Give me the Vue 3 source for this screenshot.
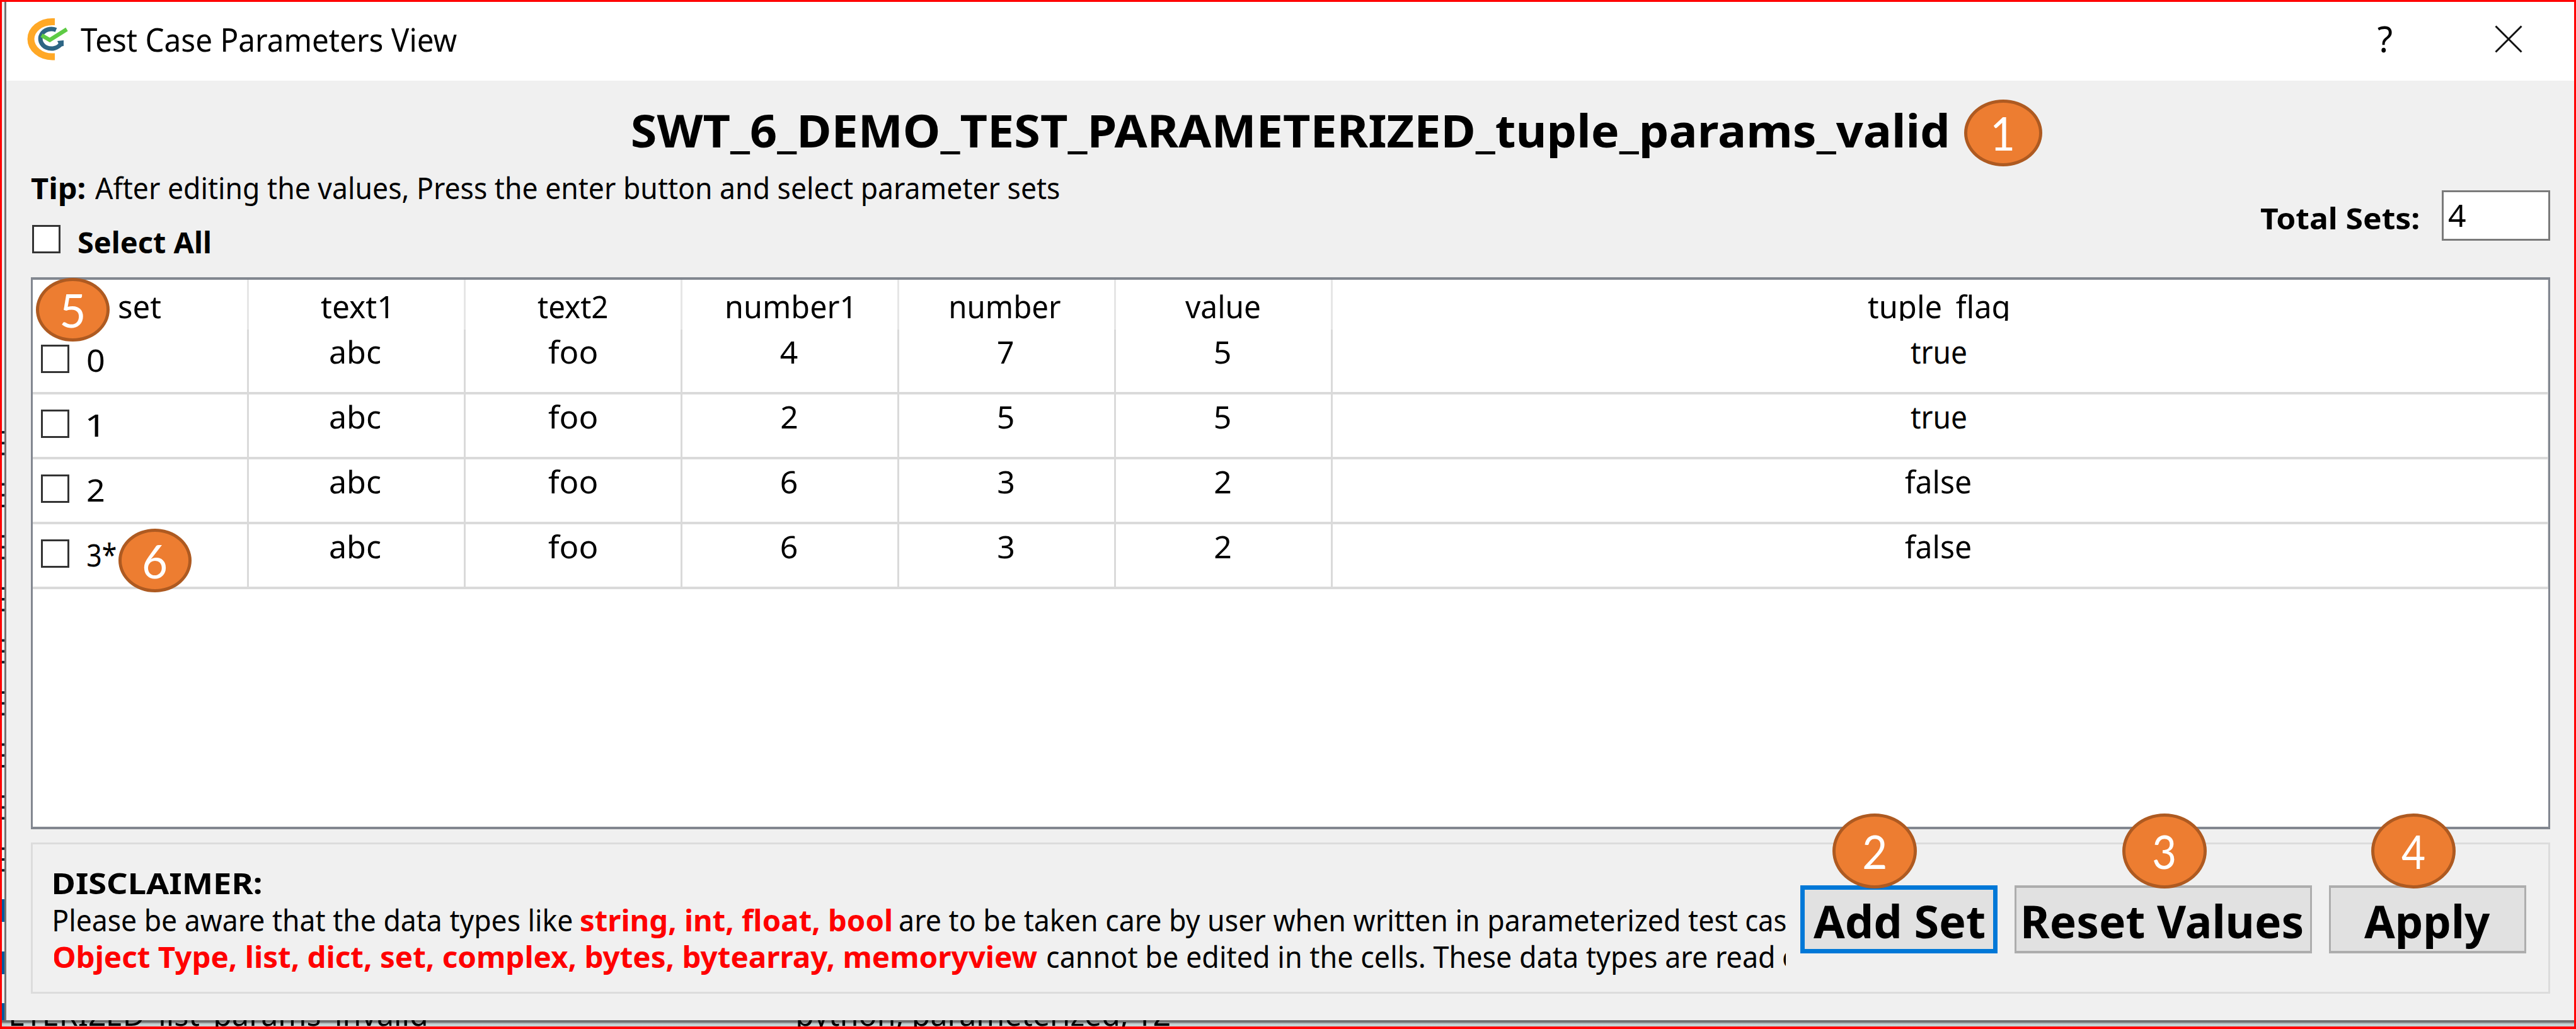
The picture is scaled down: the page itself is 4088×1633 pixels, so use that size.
<script setup>
// Stretches a run of text so that its visible glyphs span exactly the given width.
const pen = document.createElement('canvas').getContext('2d')
const vFit = {
  mounted(el, { value }) {
    const cs = getComputedStyle(el)
    pen.font = `${cs.fontWeight} ${cs.fontSize} ${cs.fontFamily}`
    const m = pen.measureText(el.textContent.trim())
    const scale = value / (m.actualBoundingBoxLeft + m.actualBoundingBoxRight)
    el.style.marginRight = `${value - el.offsetWidth}px`
    el.style.transform = `translateX(${m.actualBoundingBoxLeft * scale}px) scaleX(${scale})`
  },
}

const headers = [
  ['set', 66], ['text1', 107], ['text2', 110], ['number1', 196], ['number', 174], ['value', 118], ['tuple_flag', 223],
]
const widths = { abc: 80, foo: 77, true: 88, false: 104, 2: 24, 3: 24, 4: 27, 5: 23, 6: 25, 7: 24 }
const rows = [
  { id: '0', w: 26, cells: ['abc', 'foo', '4', '7', '5', 'true'] },
  { id: '1', w: 17, cells: ['abc', 'foo', '2', '5', '5', 'true'] },
  { id: '2', w: 25, cells: ['abc', 'foo', '6', '3', '2', 'false'] },
  { id: '3*', w: 45, cells: ['abc', 'foo', '6', '3', '2', 'false'] },
]
const badges = [
  { n: 1, x: 3117, y: 158, w: 124, h: 106, g: 31 },
  { n: 2, x: 2908, y: 1291, w: 134, h: 119, g: 34 },
  { n: 3, x: 3368, y: 1291, w: 134, h: 119, g: 33 },
  { n: 4, x: 3763, y: 1291, w: 134, h: 119, g: 37 },
  { n: 5, x: 57, y: 441, w: 117, h: 101, g: 34 },
  { n: 6, x: 188, y: 839, w: 116, h: 101, g: 36 },
]
const marks = Array.from({ length: 27 }, (_, i) => 681 + Math.floor(i / 3) * 82.6 + (i % 3) * 17.2)
</script>

<template>
  <div class="screen">
    <div class="main">
      <svg class="gutter" width="4" height="1616" viewBox="0 0 4 1616">
        <rect v-for="y in marks" :key="y" x="0" :y="y" width="4" height="4" fill="#14202c" />
        <rect v-for="y in [1424, 1507, 1589]" :key="y" x="0" :y="y" width="4" height="36" fill="#005a9e" />
      </svg>
      <div class="window">
        <header class="titlebar">
          <svg class="logo" width="68" height="72" viewBox="41 26 68 72" fill="none">
            <path d="M87 34.5H83C64 34.5 49 47 49 62S64 90 83 90H87" stroke="#ffa826" stroke-width="11" />
            <path d="M89 47.5A17.5 15.5 0 1 0 97 69" stroke="#2d6584" stroke-width="7" />
            <path d="M91 65L101 64L101 73L95 74Z" fill="#2d6584" />
            <path d="M66 56L79 63.5L106 46.5" stroke="#5ecb45" stroke-width="6.5" />
          </svg>
          <span class="caption"><span v-fit="597" class="fit">Test Case Parameters View</span></span>
          <span class="help"><span v-fit="23" class="fit">?</span></span>
          <svg class="close" width="44" height="44" viewBox="0 0 44 44">
            <path d="M1.5 1.5L42.5 42.5M42.5 1.5L1.5 42.5" stroke="#111" stroke-width="3" />
          </svg>
        </header>
        <main class="body">
          <h1><span v-fit="2086" class="fit">SWT_6_DEMO_TEST_PARAMETERIZED_tuple_params_valid</span></h1>
          <section class="controls">
            <div>
              <div class="tip"><b v-fit="85" class="fit">Tip:</b><span v-fit="1530" class="fit">After editing the values, Press the enter button and select parameter sets</span></div>
              <label class="all"><i class="check"></i><b v-fit="208" class="fit">Select All</b></label>
            </div>
            <div class="total">
              <b v-fit="251" class="fit">Total Sets:</b>
              <div class="field"><span v-fit="27" class="fit">4</span></div>
            </div>
          </section>
          <section class="table">
            <div class="row head">
              <div v-for="h in headers" :key="h[0]" class="cell">
                <div :class="{ clip: h[0] === 'tuple_flag' }"><span v-fit="h[1]" class="fit">{{ h[0] }}</span></div>
              </div>
            </div>
            <div v-for="r in rows" :key="r.id" class="row">
              <div class="cell index"><i class="check"></i><span v-fit="r.w" class="fit">{{ r.id }}</span></div>
              <div v-for="(c, i) in r.cells" :key="i" class="cell"><span v-fit="widths[c]" class="fit">{{ c }}</span></div>
            </div>
          </section>
          <section class="notice">
            <div class="text">
              <div class="line"><b v-fit="328" class="fit">DISCLAIMER:</b></div>
              <div class="line">
                <span v-fit="822" class="fit">Please be aware that the data types like</span>
                <b v-fit="492" class="fit red">string, int, float, bool</b>
                <span v-fit="1329" class="fit">are to be taken care by user when written in parameterized test</span>
                <span v-fit="63" class="fit">cas</span>
              </div>
              <div class="line second">
                <b v-fit="1561" class="fit red">Object Type, list, dict, set, complex, bytes, bytearray, memoryview</b>
                <span v-fit="1152" class="fit">cannot be edited in the cells. These data types are read</span>
                <span v-fit="23" class="fit">o</span>
              </div>
            </div>
            <div class="buttons">
              <button class="focus"><span v-fit="271" class="fit">Add Set</span></button>
              <button class="wide"><span v-fit="442" class="fit">Reset Values</span></button>
              <button><span v-fit="200" class="fit">Apply</span></button>
            </div>
          </section>
        </main>
      </div>
    </div>
    <footer class="behind">
      <span v-fit="659" class="fit">ETERIZED_list_params_invalid</span>
      <span v-fit="590" class="fit tags">python, parameterized, TZ</span>
    </footer>
    <div v-for="b in badges" :key="b.n" class="badge"
      :style="{ left: b.x - 3 + 'px', top: b.y - 3 + 'px', width: b.w + 'px', height: b.h + 'px' }">
      <span v-fit="b.g" class="fit">{{ b.n }}</span>
    </div>
  </div>
</template>

<style>
body { margin: 0; overflow: hidden; }
</style>

<style scoped>
.screen {
  position: relative;
  box-sizing: border-box;
  width: 4088px;
  height: 1633px;
  border: solid #f00;
  border-width: 3px 3px 4px 3px;
  background: #f0f0f0;
  color: #000;
  font-family: "Noto Sans", "Open Sans", sans-serif;
  font-size: 47px;
  overflow: hidden;
}
.fit { display: inline-block; flex: none; white-space: nowrap; transform-origin: 0 50%; }
.main { display: flex; height: 1616px; }
.gutter { flex: none; background: #eef0f0; }
.window { box-sizing: border-box; flex: 1; border-left: 3px solid #747474; background: #f0f0f0; }
.titlebar { display: flex; height: 125px; background: #fff; }
.logo { margin: 23px 0 0 31px; flex: none; }
.caption { margin-left: 19px; font-size: 51px; line-height: 118px; }
.help { margin-left: auto; font-size: 56px; line-height: 116px; }
.close { flex: none; margin: 37px 82px 0 163px; }
.body { padding: 28px 38px 0 39px; }
h1 { margin: 0; padding-left: 955px; font-size: 72px; line-height: 100px; height: 100px; }
.controls { display: flex; justify-content: space-between; height: 172px; }
.tip { display: flex; gap: 17px; line-height: 84px; height: 84px; }
.all { display: flex; line-height: 88px; height: 88px; padding-left: 2px; gap: 29px; }
.check { box-sizing: border-box; flex: none; width: 45px; height: 45px; margin-top: 17px; border: 3px solid #333; background: #fff; }
.total { display: flex; gap: 37px; margin-top: 46px; line-height: 88px; }
.field {
  box-sizing: border-box; width: 172px; height: 80px; padding-left: 8px;
  border: 3px solid #7a7a7a; background: #fff; font-size: 50px; line-height: 73px;
}
.table {
  box-sizing: border-box; height: 876px; margin-top: 12px;
  border: 3px solid #828790; border-top-width: 4px; border-bottom-width: 4px;
  background: #fff; font-size: 50px; line-height: 71px;
}
.row { display: grid; grid-template-columns: 343px repeat(5, 344px) 1fr; height: 103px; }
.cell {
  display: flex; justify-content: center; box-sizing: border-box; padding-right: 3px;
  border-right: 3px solid #dadada; border-bottom: 4px solid #dadada;
}
.cell:first-child { padding-right: 0; }
.cell:last-child { border-right-width: 1px; padding-right: 7px; }
.head { height: 79px; line-height: 84px; }
.head .cell { border-bottom: 0; border-right-color: #e6e6e6; }
.head .cell:nth-child(2) { padding-right: 6px; }
.clip { height: 65px; overflow: hidden; padding: 0 12px; }
.index { justify-content: flex-start; padding-left: 13px; gap: 29px; line-height: 97px; }
.index .check { margin-top: 24px; }
.notice {
  display: flex; justify-content: space-between; box-sizing: border-box;
  height: 240px; margin-top: 21px; padding: 0 35px 0 34px; border: 3px solid #dcdcdc;
}
.text { width: 2748px; height: 210px; padding-top: 32px; box-sizing: border-box; overflow: hidden; }
.line { display: flex; gap: 14px; height: 58.5px; line-height: 58.5px; }
.line.second { gap: 16px; margin-left: -1px; }
.red { color: #f00; }
.buttons { display: flex; gap: 27px; margin-top: 65px; }
button {
  display: flex; align-items: center; justify-content: center; box-sizing: border-box;
  width: 313px; height: 108px; padding: 4px 0 0; border: solid #adadad; border-width: 4px 3px;
  background: #e1e1e1; color: #000; font: bold 72px/100px "Noto Sans", sans-serif;
}
.wide { width: 472px; }
.focus { border: 7px solid #0078d7; }
.behind {
  display: flex; height: 10px; padding-left: 14px; overflow: hidden;
  background: linear-gradient(#6e6e6e 0 3px, #909696 4px, #c4d0d0 6px, #cbd7d7 10px);
  font-size: 50px; line-height: 0;
}
.behind .fit { height: 0; margin-top: -10px; }
.tags { margin-left: 590px; }
.badge {
  position: absolute; display: flex; align-items: center; justify-content: center; box-sizing: border-box;
  border: 5px solid #ae5a21; border-radius: 50%; background: #ed7d31; color: #fff;
  font-family: Lato, "Noto Sans", sans-serif; font-size: 73px; line-height: 88px;
}
</style>
